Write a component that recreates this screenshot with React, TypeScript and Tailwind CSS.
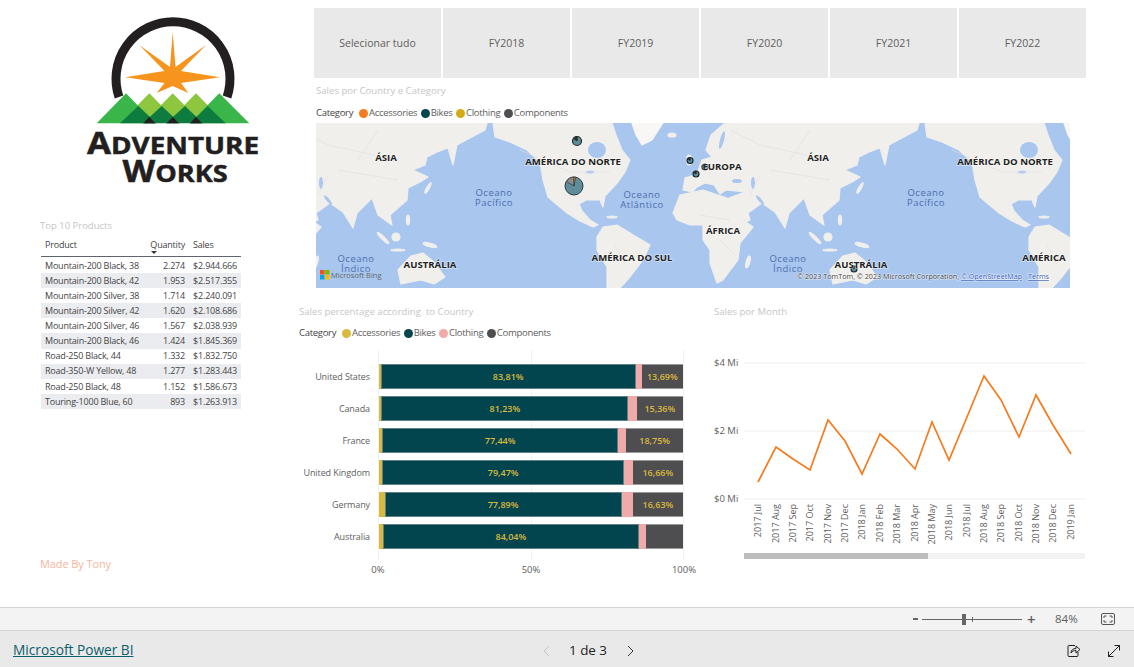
import React from 'react';

const font = "font-['Open_Sans',sans-serif]";

const products = [
  ['Mountain-200 Black, 38', '2.274', '$2.944.666'],
  ['Mountain-200 Black, 42', '1.953', '$2.517.355'],
  ['Mountain-200 Silver, 38', '1.714', '$2.240.091'],
  ['Mountain-200 Silver, 42', '1.620', '$2.108.686'],
  ['Mountain-200 Silver, 46', '1.567', '$2.038.939'],
  ['Mountain-200 Black, 46', '1.424', '$1.845.369'],
  ['Road-250 Black, 44', '1.332', '$1.832.750'],
  ['Road-350-W Yellow, 48', '1.277', '$1.283.443'],
  ['Road-250 Black, 48', '1.152', '$1.586.673'],
  ['Touring-1000 Blue, 60', '893', '$1.263.913'],
];

const countries = [
  { name: 'United States', acc: 0.55, bikes: 83.81, clo: 1.96, comp: 13.69, a: '83,81%', b: '13,69%' },
  { name: 'Canada', acc: 0.76, bikes: 81.23, clo: 2.7, comp: 15.36, a: '81,23%', b: '15,36%' },
  { name: 'France', acc: 1.1, bikes: 77.44, clo: 2.8, comp: 18.75, a: '77,44%', b: '18,75%' },
  { name: 'United Kingdom', acc: 1.05, bikes: 79.47, clo: 2.8, comp: 16.66, a: '79,47%', b: '16,66%' },
  { name: 'Germany', acc: 1.85, bikes: 77.89, clo: 3.7, comp: 16.63, a: '77,89%', b: '16,63%' },
  { name: 'Australia', acc: 1.3, bikes: 84.04, clo: 2.4, comp: 12.2, a: '84,04%', b: '' },
];

const months = [
  '2017 Jul', '2017 Aug', '2017 Sep', '2017 Oct', '2017 Nov', '2017 Dec', '2018 Jan', '2018 Feb', '2018 Mar', '2018 Apr',
  '2018 May', '2018 Jun', '2018 Jul', '2018 Aug', '2018 Sep', '2018 Oct', '2018 Nov', '2018 Dec', '2019 Jan',
];

const linePoints: [number, number][] = [
  [758, 482], [776, 447], [793, 459], [810, 470], [828, 420], [845, 441], [862, 474], [880, 434], [897, 449], [915, 469],
  [932, 422], [949, 460], [967, 417], [984, 376], [1001, 400], [1019, 437], [1036, 395], [1053, 425], [1071, 454],
];

function Logo() {
  const star = '172.7,32 175.5,67 206,45 181,71 220,77.3 181,83 188.3,93 172.7,86 156.7,93 164.5,83 125,77.3 164.5,71 139.3,45 170,67';
  return (
    <svg viewBox="80 10 190 180" className="w-[190px] h-[180px] ml-[80px] mt-[10px] block">
      <path d="M119 97 A 57 57 0 1 1 227 97" fill="none" stroke="#231f20" strokeWidth="9" />
      <polygon points={star} fill="#f7941e" />
      <polygon points="126,117 149.3,93.3 172.7,117" fill="#8dc63f" />
      <polygon points="149.3,117 172.7,93.3 196,117" fill="#8dc63f" />
      <polygon points="172.7,117 196,93.3 219.3,117" fill="#8dc63f" />
      <polygon points="96.7,123.3 126,93.3 155,123.3" fill="#39b54a" />
      <polygon points="190,123.3 219.3,93.3 249.3,123.3" fill="#39b54a" />
      <polygon points="120,123.3 138.3,106 156.7,123.3" fill="#0f7c3f" />
      <polygon points="143,123.3 161.7,106 180,123.3" fill="#0f7c3f" />
      <polygon points="166,123.3 185,106 203,123.3" fill="#0f7c3f" />
      <polygon points="190,123.3 207.7,106 225.7,123.3" fill="#0f7c3f" />
      <polygon points="143.3,123.3 149.3,116.7 155.3,123.3" fill="#231f20" />
      <polygon points="166.7,123.3 172.7,116.7 178.7,123.3" fill="#231f20" />
      <polygon points="190,123.3 196,116.7 202,123.3" fill="#231f20" />
      <g fill="#231f20" stroke="#231f20" strokeWidth="0.5" fontFamily="'Open Sans',sans-serif" fontWeight="700" textAnchor="middle">
        <text transform="translate(173 153.5) scale(1.16 1)">
          <tspan fontSize="30">A</tspan>
          <tspan fontSize="24">DVENTURE</tspan>
        </text>
        <text transform="translate(175 182) scale(1.13 1)">
          <tspan fontSize="30">W</tspan>
          <tspan fontSize="24">ORKS</tspan>
        </text>
      </g>
    </svg>
  );
}

function Legend({ items }: { items: [string, string][] }) {
  return (
    <div className="flex items-center h-[14px] text-[9.5px] tracking-[-0.3px] text-[#605e5c]">
      <span className="mr-[6px] text-[#444]">Category</span>
      {items.map(([label, color]) => (
        <span key={label} className="flex items-center mr-[3.5px]">
          <span className="w-[9px] h-[9px] rounded-full mr-[1px]" style={{ backgroundColor: color }} />
          {label}
        </span>
      ))}
    </div>
  );
}

function Pie({ x, y, r }: { x: number; y: number; r: number }) {
  const small = r < 5;
  return (
    <g>
      <circle cx={x} cy={y} r={r} fill="#5f8d9a" stroke="#1d2b30" strokeWidth={small ? 1.2 : 0.9} />
      <path d={`M${x} ${y} L${x - r * 0.85} ${y - r * 0.5} A${r} ${r} 0 0 1 ${x} ${y - r} Z`} fill={small ? '#333333' : '#8b8b8b'} stroke="#1d2b30" strokeWidth="0.6" />
      <path d={`M${x} ${y} L${x} ${y - r} L${x + r * 0.2} ${y - r} Z`} fill="#c8860d" stroke="#1d2b30" strokeWidth="0.5" />
    </g>
  );
}

function World() {
  return (
    <g fill="#f1efec" stroke="#f1efec" strokeWidth="1.2" strokeLinejoin="round">
      {/* north america */}
      <path d="M493 123 L495 137 L510 142 L527 150 L540 162 L543 180 L548 197 L567 213 L580 221 L593 227 L598 225 L590 220 L582 211 L579 204 L586 200 L600 200 L603 207 L605 196 L618 182 L625 172 L630 160 L622 150 L616 135 L612 123 Z" />
      <path d="M632 123 L663 123 L652 140 L642 145 L636 135 Z" fill="#f8f7f5" stroke="#f8f7f5" />
      <ellipse cx="597" cy="150" rx="9" ry="8" fill="#a9c6ef" stroke="none" />
      <ellipse cx="590" cy="172" rx="4" ry="1.5" fill="#a9c6ef" stroke="none" />
      <ellipse cx="672" cy="135" rx="4" ry="2" />
      <ellipse cx="612" cy="217" rx="5" ry="1" />
      {/* south america */}
      <path d="M597 237 L603 227 L617 225 L630 233 L650 245 L643 260 L630 277 L620 288 L607 288 L607 267 L597 250 Z" />
      {/* eurasia */}
      <path d="M919 123 L917 130 L902 138 L889 145 L885 165 L880 148 L869 152 L859 157 L857 165 L845 170 L860 177 L852 182 L840 188 L839 200 L822 215 L824 225 L810 215 L804 198 L789 213 L785 228 L775 212 L762 203 L748 213 L750 220 L742 224 L735 208 L729 198 L745 192 L726 190 L720 194 L714 185 L705 183 L697 187 L692 192 L683 190 L685 178 L697 174 L702 160 L712 157 L706 150 L711 135 L725 123 Z" />
      <ellipse cx="689" cy="160" rx="2.5" ry="5" />
      <ellipse cx="722" cy="140" rx="2" ry="9" fill="#a9c6ef" stroke="none" transform="rotate(15 722 140)" />
      <ellipse cx="737" cy="181" rx="5" ry="2" fill="#a9c6ef" stroke="none" />
      <ellipse cx="753" cy="183" rx="2" ry="6" fill="#a9c6ef" stroke="none" />
      <ellipse cx="760" cy="200" rx="1.5" ry="6" fill="#a9c6ef" stroke="none" transform="rotate(-40 760 200)" />
      {/* africa */}
      <path d="M673 213 L680 195 L703 190 L733 200 L743 220 L753 227 L740 243 L738 260 L723 280 L717 283 L710 263 L710 250 L703 240 L703 225 L690 225 L677 220 Z" />
      <ellipse cx="748" cy="262" rx="1.8" ry="6" transform="rotate(15 748 262)" />
      {/* australia */}
      <path d="M830 270 L843 256 L855 253 L866 262 L877 277 L866 284 L853 280 L833 284 Z" />
      {/* islands */}
      <ellipse cx="860" cy="188" rx="1.2" ry="6" transform="rotate(30 860 188)" />
      <ellipse cx="840" cy="220" rx="1.5" ry="5" />
      <ellipse cx="815" cy="238" rx="8" ry="1.5" transform="rotate(45 815 238)" />
      <ellipse cx="828" cy="237" rx="4" ry="4" />
      <ellipse cx="862" cy="245" rx="7" ry="1.8" transform="rotate(15 862 245)" />
      <ellipse cx="830" cy="250" rx="7" ry="1" />
      {/* borders */}
      <path d="M730 130 L760 145 L830 160 M770 170 L830 180 M760 175 L750 195 M520 150 L570 172 L610 172 M700 215 L730 220 M720 240 L735 255 M615 245 L625 265 M790 160 L810 130" fill="none" stroke="#dcdee0" strokeWidth="0.6" />
    </g>
  );
}

function MapLabel({ x, y, children }: { x: number; y: number; children: string }) {
  return (
    <text x={x} y={y} textAnchor="middle" fontSize="9.6" fontWeight="700" fill="#222" stroke="#ffffff" strokeOpacity="0.5" strokeWidth="1.5" paintOrder="stroke">
      {children}
    </text>
  );
}

function Ocean({ x, y, lines }: { x: number; y: number; lines: [string, string] }) {
  return (
    <text textAnchor="middle" fontSize="9.5" letterSpacing="0.5" fill="#4d6eae">
      <tspan x={x} y={y}>{lines[0]}</tspan>
      <tspan x={x} y={y + 10}>{lines[1]}</tspan>
    </text>
  );
}

function WorldMap() {
  return (
    <svg viewBox="316 123 754 165" className="w-[754px] h-[165px] block" fontFamily="'Open Sans',sans-serif">
      <rect x="316" y="123" width="754" height="165" fill="#a9c6ef" />
      <g transform="translate(-432 0)"><World /></g>
      <World />
      <g transform="translate(432 0)"><World /></g>

      <Pie x={577} y={141} r={4.5} />
      <Pie x={574} y={186} r={9} />
      <Pie x={690} y={160.5} r={3} />
      <Pie x={696} y={174} r={3} />
      <Pie x={705} y={167} r={3} />
      <Pie x={854} y={269} r={3} />

      <MapLabel x={386} y={161}>ÁSIA</MapLabel>
      <MapLabel x={573} y={164.5}>AMÉRICA DO NORTE</MapLabel>
      <MapLabel x={722} y={170}>EUROPA</MapLabel>
      <MapLabel x={818} y={161}>ÁSIA</MapLabel>
      <MapLabel x={1005} y={165}>AMÉRICA DO NORTE</MapLabel>
      <MapLabel x={723} y={233.5}>ÁFRICA</MapLabel>
      <MapLabel x={632} y={261}>AMÉRICA DO SUL</MapLabel>
      <MapLabel x={430} y={267.5}>AUSTRÁLIA</MapLabel>
      <MapLabel x={861} y={267.5}>AUSTRÁLIA</MapLabel>
      <MapLabel x={1044} y={260.5}>AMÉRICA</MapLabel>

      <Ocean x={494} y={196} lines={['Oceano', 'Pacífico']} />
      <Ocean x={926} y={196} lines={['Oceano', 'Pacífico']} />
      <Ocean x={642} y={198} lines={['Oceano', 'Atlântico']} />
      <Ocean x={356} y={262} lines={['Oceano', 'Índico']} />
      <Ocean x={788} y={262} lines={['Oceano', 'Índico']} />

      <rect x="320" y="270" width="4.5" height="4.5" fill="#f25022" />
      <rect x="325" y="270" width="4.5" height="4.5" fill="#7fba00" />
      <rect x="320" y="275" width="4.5" height="4.5" fill="#00a4ef" />
      <rect x="325" y="275" width="4.5" height="4.5" fill="#ffb900" />
      <text x="331" y="278" fontSize="7.5" fill="#666">Microsoft Bing</text>
      <text x="1049" y="279" textAnchor="end" fontSize="7.2" fill="#444" stroke="#ffffff" strokeOpacity="0.6" strokeWidth="1.2" paintOrder="stroke">
        © 2023 TomTom, © 2023 Microsoft Corporation,{' '}
        <tspan fill="#3f63b5" textDecoration="underline">© OpenStreetMap</tspan>
        {'   '}
        <tspan dx="4" fill="#3f63b5" textDecoration="underline">Terms</tspan>
      </text>
    </svg>
  );
}

function TopProducts() {
  return (
    <div className="ml-[41px] mt-[30px] w-[200px] text-[9px] tracking-[-0.2px] text-[#444]">
      <div className="h-[12px] leading-[12px] text-[9.5px] tracking-normal text-[#c6c6c6] -ml-px">Top 10 Products</div>
      <div className="flex h-[24px] mt-[1px] border-b border-[#5e6470] pt-[5px] relative">
        <span className="w-[108px] pl-[4px]">Product</span>
        <span className="w-[42px] text-right pr-[6px] relative">
          Quantity
          <span className="absolute left-[0px] top-[13px] w-0 h-0 border-x-[3px] border-x-transparent border-t-[3px] border-t-[#333] ml-[2px]" />
        </span>
        <span className="pl-[2px]">Sales</span>
      </div>
      <div className="mt-[1px]">
        {products.map((p, i) => (
          <div key={p[0]} className={`flex h-[15.1px] items-center ${i % 2 === 1 ? 'bg-[#ebecef]' : 'bg-white'}`}>
            <span className="w-[108px] pl-[4px] whitespace-nowrap">{p[0]}</span>
            <span className="w-[36px] text-right">{p[1]}</span>
            <span className="w-[52px] text-right">{p[2]}</span>
          </div>
        ))}
      </div>
    </div>
  );
}

function BarChart() {
  return (
    <div className="w-[415px] text-[9.5px] text-[#605e5c]">
      <div className="h-[14px] mt-[17px] leading-[14px] text-[9.6px] text-[#c6c6c6]">Sales percentage according&nbsp; to Country</div>
      <div className="mt-[7px]">
        <Legend items={[['Accessories', '#d9b93e'], ['Bikes', '#03454f'], ['Clothing', '#efaaa9'], ['Components', '#4e4d4f']]} />
      </div>
      <div className="flex mt-[10px]">
        <div className="w-[71px] pt-[14px] flex flex-col gap-[7px] shrink-0 text-right text-[9px] tracking-[-0.1px]">
          {countries.map((c) => (
            <div key={c.name} className="h-[25px] leading-[25px] whitespace-nowrap">{c.name}</div>
          ))}
        </div>
        <div className="ml-[8px] w-[306px] relative">
          <div className="h-[210px] pt-[14px] flex flex-col gap-[7px] border-x border-[#f0f0f0] relative">
            <div className="absolute left-1/2 top-0 bottom-0 w-px bg-[#f0f0f0]" />
            {countries.map((c) => (
              <div key={c.name} className="h-[25px] flex relative text-[9px] font-semibold text-[#d9b93e]">
                <div style={{ flexGrow: c.acc, flexBasis: 0 }} className="bg-[#d9b93e]" />
                <div style={{ flexGrow: c.bikes, flexBasis: 0 }} className="bg-[#03454f] border border-[#5f8087] flex items-center justify-center">{c.a}</div>
                <div style={{ flexGrow: c.clo, flexBasis: 0 }} className="bg-[#efaaa9]" />
                <div style={{ flexGrow: c.comp, flexBasis: 0 }} className="bg-[#4e4d4f] border-y border-[#9a9a9a] flex items-center justify-center">{c.b}</div>
              </div>
            ))}
          </div>
          <div className="flex justify-between h-[20px] items-center text-[9.5px] whitespace-nowrap">
            <span className="w-0 flex justify-center">0%</span>
            <span className="w-0 flex justify-center">50%</span>
            <span className="w-0 flex justify-center">100%</span>
          </div>
        </div>
      </div>
    </div>
  );
}

function LineChart() {
  const pts = linePoints.map((p) => p.join(',')).join(' ');
  return (
    <div className="w-[372px] text-[9.5px] text-[#605e5c]">
      <div className="h-[14px] mt-[17px] leading-[14px] text-[9.6px] text-[#c6c6c6]">Sales por Month</div>
      <svg viewBox="714 320 372 230" className="w-[372px] h-[230px] block mt-px" fontFamily="'Open Sans',sans-serif">
        {[363, 431, 499].map((y) => (
          <line key={y} x1="744" x2="1085" y1={y} y2={y} stroke="#eeeeee" strokeWidth="1" />
        ))}
        <text x="714" y="366" fontSize="9.5" fill="#605e5c">$4 Mi</text>
        <text x="714" y="434" fontSize="9.5" fill="#605e5c">$2 Mi</text>
        <text x="714" y="502" fontSize="9.5" fill="#605e5c">$0 Mi</text>
        <polyline points={pts} fill="none" stroke="#f47b20" strokeWidth="1.7" />
        {months.map((m, i) => (
          <text
            key={m}
            x={linePoints[i][0] + 3}
            y={504}
            fontSize="9"
            fill="#605e5c"
            textAnchor="end"
            transform={`rotate(-90 ${linePoints[i][0] + 3} 504)`}
          >
            {m}
          </text>
        ))}
      </svg>
      <div className="ml-[30px] w-[341px] h-[6px] mt-[3px] bg-[#f3f3f3]">
        <div className="w-[184px] h-[6px] bg-[#bdbdbd]" />
      </div>
    </div>
  );
}

export default function App() {
  return (
    <div className={`w-[1134px] h-[667px] flex flex-col bg-white overflow-hidden ${font}`}>
      <main className="h-[607px] flex shrink-0">
        <aside className="w-[299px] shrink-0 flex flex-col">
          <Logo />
          <TopProducts />
          <div className="ml-[40px] mt-[147px] text-[11px] tracking-[-0.1px] text-[#f6b69c]">Made By Tony</div>
        </aside>
        <section className="flex-1 flex flex-col">
          <div className="ml-[15px] mt-[8px] w-[772px] h-[70px] flex gap-[2px] shrink-0">
            {['Selecionar tudo', 'FY2018', 'FY2019', 'FY2020', 'FY2021', 'FY2022'].map((s) => (
              <div key={s} className="flex-1 bg-[#e9e9e9] flex items-center justify-center pt-[2px] text-[10.5px] text-[#605e5c]">{s}</div>
            ))}
          </div>
          <div className="ml-[17px] text-[9.6px]">
            <div className="h-[24px] leading-[26px] text-[#c6c6c6]">Sales por Country e Category</div>
            <div className="h-[21px] pt-[4px]">
              <Legend items={[['Accessories', '#f47b20'], ['Bikes', '#03454f'], ['Clothing', '#d2ac12'], ['Components', '#4e4d4f']]} />
            </div>
            <WorldMap />
          </div>
          <div className="flex">
            <BarChart />
            <LineChart />
          </div>
        </section>
      </main>

      <div className="h-[24px] shrink-0 bg-[#f3f3f3] border-y border-[#d4d4d4] flex items-center text-[#605e5c]">
        <span className="ml-[913px] w-[5px] h-[2px] bg-[#666]" />
        <div className="ml-[4px] w-[100px] h-px bg-[#666] relative">
          <span className="absolute left-[40px] -top-[5px] w-[4px] h-[11px] bg-[#666]" />
          <span className="absolute left-[50px] -top-[2px] w-px h-[5px] bg-[#666]" />
        </div>
        <span className="ml-[5px] text-[15px] font-semibold leading-none w-[10px]">+</span>
        <span className="ml-[18px] w-[28px] text-[11.5px]">84%</span>
        <svg viewBox="0 0 14 12" className="ml-[18px] w-[14px] h-[12px]" fill="none" stroke="#555" strokeWidth="1">
          <rect x="0.5" y="0.5" width="13" height="11" rx="1.5" />
          <path d="M3 5V3h2.5M11 5V3H8.5M3 7v2h2.5M11 7v2H8.5" />
        </svg>
      </div>

      <footer className="flex-1 bg-[#e9e9e9] flex items-center pt-[3px]">
        <a className="ml-[13px] w-[529px] text-[13.7px] text-[#0b5e6b] underline">Microsoft Power BI</a>
        <svg viewBox="0 0 8 12" className="w-[8px] h-[12px]" fill="none" stroke="#c4c4c4" strokeWidth="1"><path d="M7 1 2 6l5 5" /></svg>
        <span className="ml-[19px] w-[58px] text-[13.4px] text-[#222]">1 de 3</span>
        <svg viewBox="0 0 8 12" className="w-[8px] h-[12px]" fill="none" stroke="#333" strokeWidth="1"><path d="m1 1 5 5-5 5" /></svg>
        <svg viewBox="0 0 14 14" className="ml-[432px] w-[14px] h-[14px]" fill="none" stroke="#222" strokeWidth="1">
          <path d="M8 1.5h-6a1 1 0 0 0-1 1v9a1 1 0 0 0 1 1h8a1 1 0 0 0 1-1V8" />
          <path d="M4 9c0-3 2-4.5 5-4.5V2l4 3.5L9 9V6.5C7 6.5 5 7 4 9Z" />
        </svg>
        <svg viewBox="0 0 14 14" className="ml-[26px] w-[14px] h-[14px]" fill="none" stroke="#222" strokeWidth="1">
          <path d="M1.5 12.5 12.5 1.5M7.5 1.5h5v5M1.5 7.5v5h5" />
        </svg>
      </footer>
    </div>
  );
}
